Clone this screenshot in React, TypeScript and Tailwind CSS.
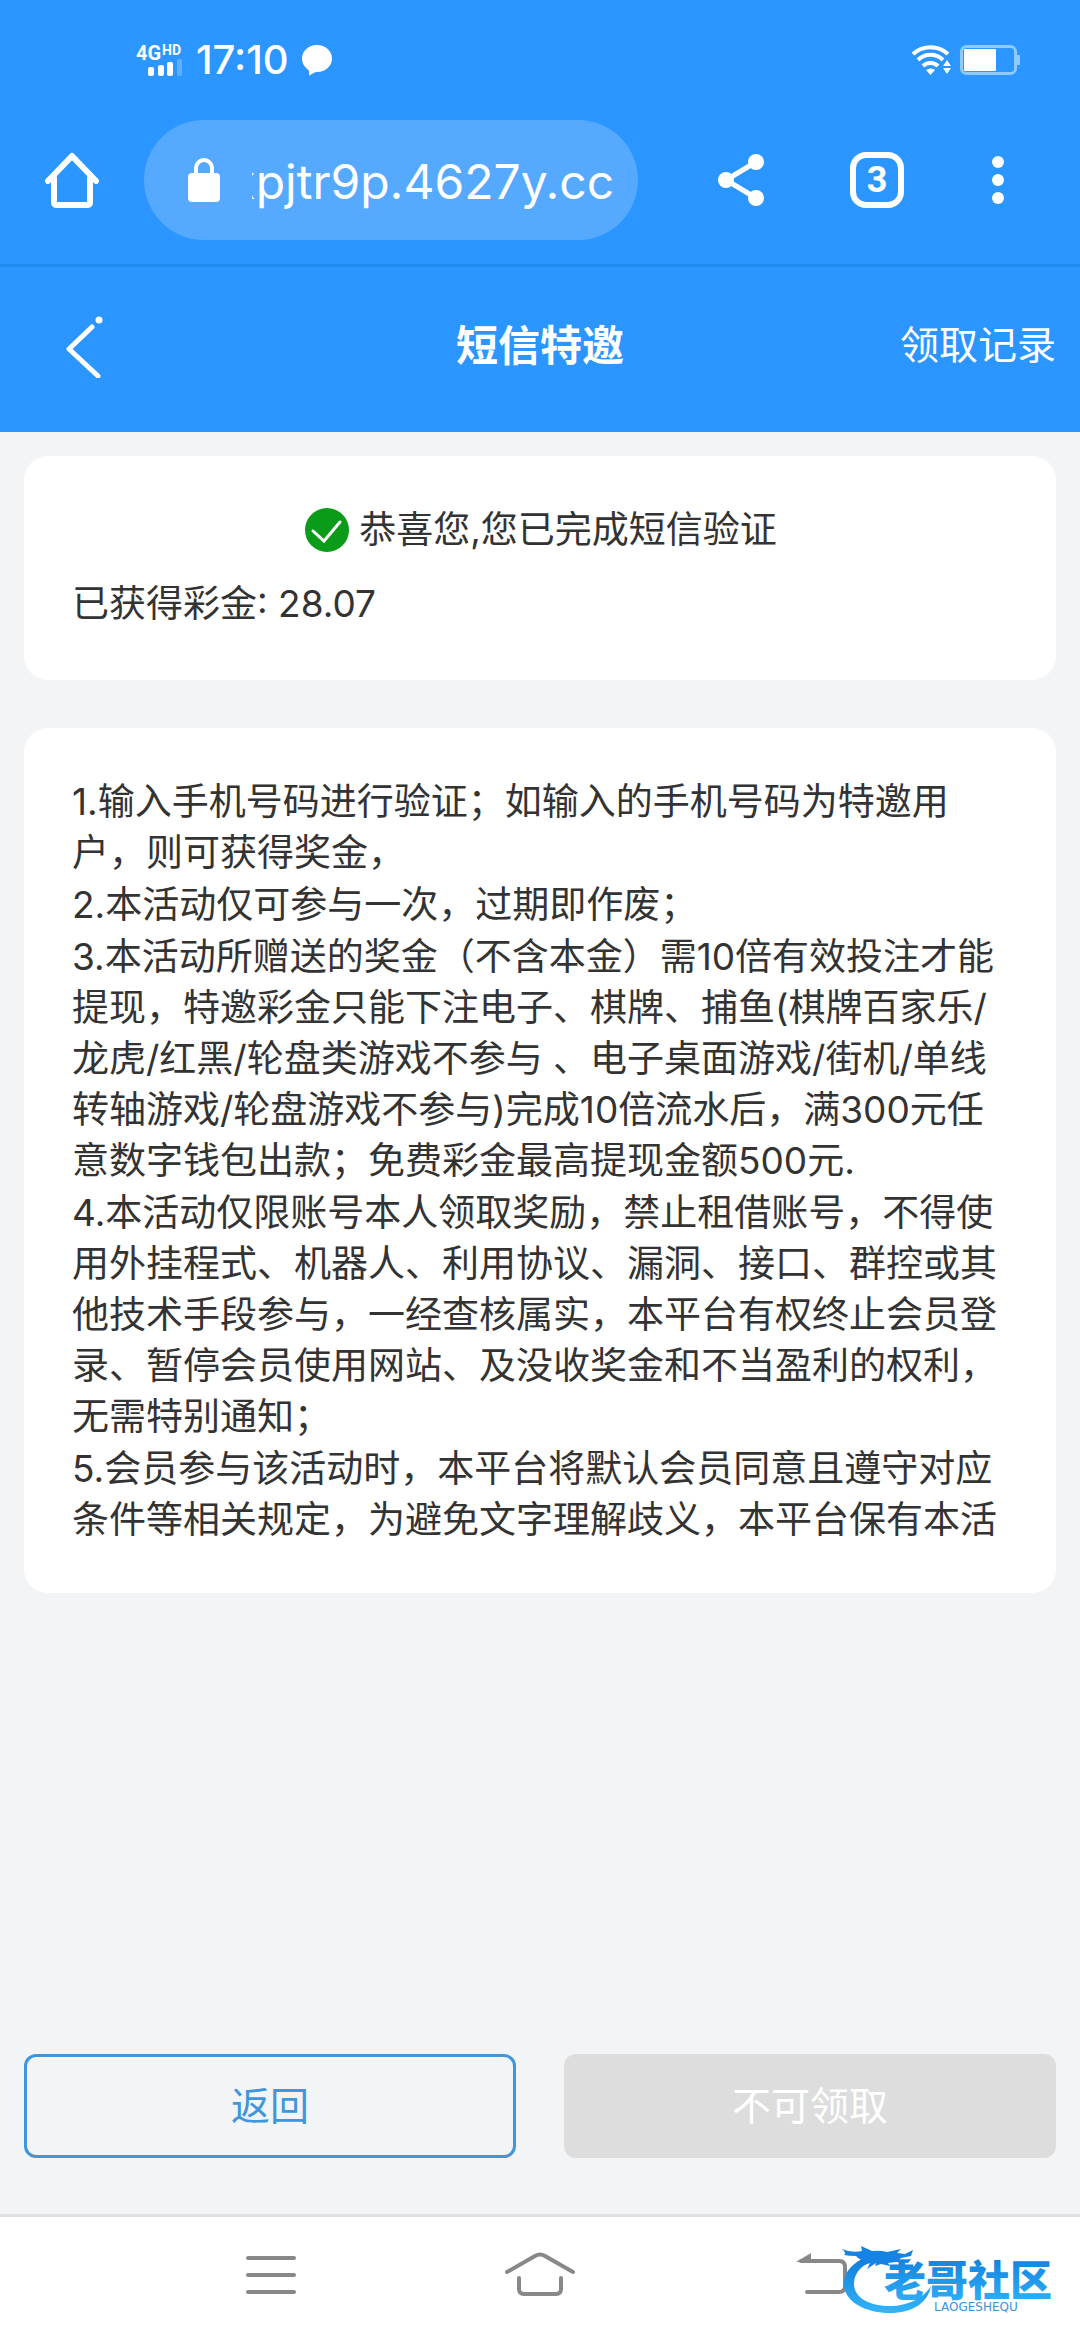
import React from "react";

const rules = [
    "1.输入手机号码进行验证；如输入的手机号码为特邀用户，则可获得奖金，",
    "2.本活动仅可参与一次，过期即作废；",
    "3.本活动所赠送的奖金（不含本金）需10倍有效投注才能提现，特邀彩金只能下注电子、棋牌、捕鱼(棋牌百家乐/龙虎/红黑/轮盘类游戏不参与 、电子桌面游戏/街机/单线转轴游戏/轮盘游戏不参与)完成10倍流水后，满300元任意数字钱包出款；免费彩金最高提现金额500元.",
    "4.本活动仅限账号本人领取奖励，禁止租借账号，不得使用外挂程式、机器人、利用协议、漏洞、接口、群控或其他技术手段参与，一经查核属实，本平台有权终止会员登录、暂停会员使用网站、及没收奖金和不当盈利的权利，无需特别通知；",
    "5.会员参与该活动时，本平台将默认会员同意且遵守对应条件等相关规定，为避免文字理解歧义，本平台保有本活",
];

const StatusBar = () => {
    return (
        <div className="flex h-30 items-center justify-between pl-34 pr-15">
            <div className="flex items-center">
                <svg className="w-12 h-9" viewBox="0 0 48 36" fill="#fff" fontFamily="Roboto, sans-serif" fontWeight="700">
                    <text x="0" y="18" fontSize="20">4G</text>
                    <text x="26" y="13" fontSize="14">HD</text>
                    <rect x="12" y="25" width="6" height="9" rx="2" />
                    <rect x="22" y="23" width="6" height="11" rx="2" />
                    <rect x="31" y="20" width="6" height="14" rx="2" />
                    <rect x="41" y="17" width="5" height="17" rx="2" opacity="0.25" />
                </svg>
                <span className="ml-3 text-[40px] leading-none font-medium">17:10</span>
                <svg className="ml-3 w-8 h-8" viewBox="0 0 32 32" fill="#fff">
                    <path d="M16 1c8.500 0 15 6 15 13.500S24.500 28 16 28c-2 0-3 1-8 3.500 0-2 .5-4-.5-5.500C4 23.500 1 19.500 1 14.500 1 7 7.500 1 16 1z" />
                </svg>
            </div>
            <div className="flex items-center gap-2">
                <svg className="w-10 h-8" viewBox="0 0 40 32" fill="none" stroke="#fff" strokeWidth="4">
                    <path d="M1 10c10-9 25-9 35 0" />
                    <path d="M6 16c7-7 18-7 25 0" />
                    <path d="M11 22c4-4 11-4 15 0" />
                    <path d="M14 26q5-3 9 0l-4.500 5z" fill="#fff" stroke="none" />
                    <path d="M35 16l4 6h-8zM31 24h8l-4 6z" fill="#fff" stroke="none" />
                </svg>
                <svg className="w-15 h-8" viewBox="0 0 60 32" fill="none">
                    <rect x="1.500" y="2.500" width="54" height="27" rx="5" stroke="#8fcaff" strokeWidth="3" />
                    <rect x="4" y="5" width="32" height="22" rx="1" fill="#fff" />
                    <rect x="57" y="11" width="3" height="10" fill="#8fcaff" />
                </svg>
            </div>
        </div>
    );
};

const BrowserBar = () => {
    return (
        <div className="flex h-30 items-center pl-11 pr-19">
            <button aria-label="主页">
                <svg className="w-14 h-14" viewBox="0 0 56 56" fill="none" stroke="#fff" strokeWidth="6" strokeLinecap="round" strokeLinejoin="round">
                    <path d="M4 29L28 4l24 25" />
                    <path d="M10 26v24q0 3 3 3h30q3 0 3-3V26" />
                </svg>
            </button>
            <div className="ml-11 flex h-30 min-w-0 grow items-center rounded-full bg-[#55a9ff] pl-11 pr-6">
                <svg className="w-8 h-11 shrink-0" viewBox="0 0 32 44" fill="none">
                    <path d="M8 18V10a8 8 0 0 1 16 0v8" stroke="#fff" strokeWidth="4" />
                    <rect x="0" y="15" width="32" height="29" rx="4" fill="#fff" />
                </svg>
                <div className="ml-8 flex min-w-0 grow justify-end overflow-hidden pt-1">
                    <span className="text-5xl leading-[64px] whitespace-nowrap">xpjtr9p.4627y.cc</span>
                </div>
            </div>
            <button aria-label="分享" className="ml-20">
                <svg className="w-12 h-13" viewBox="0 0 48 52" fill="#fff">
                    <path d="M38 8L8 26l30 18" fill="none" stroke="#fff" strokeWidth="5" />
                    <circle cx="38" cy="8" r="8" />
                    <circle cx="8" cy="26" r="8" />
                    <circle cx="38" cy="44" r="8" />
                </svg>
            </button>
            <button className="ml-21 flex size-14 items-center justify-center rounded-2xl border-6 border-white font-[Roboto,sans-serif] text-4xl font-bold">
                3
            </button>
            <button aria-label="更多" className="ml-22">
                <svg className="w-3 h-13" viewBox="0 0 12 52" fill="#fff">
                    <circle cx="6" cy="8" r="6" />
                    <circle cx="6" cy="26" r="6" />
                    <circle cx="6" cy="44" r="6" />
                </svg>
            </button>
        </div>
    );
};

const App = () => {
    return (
        <div className="flex min-h-screen flex-col bg-[#f2f4f6] font-['Inter','Noto_Sans_CJK_SC',sans-serif] text-[#333]">
            <header className="bg-[#2b96ff] text-white">
                <StatusBar />
                <BrowserBar />
                <div className="mt-6 h-[3px] bg-[#1f8af0]"></div>
                <nav className="grid h-[165px] grid-cols-3 items-center px-6 pb-2">
                    <button aria-label="返回" className="justify-self-start pl-10">
                        <svg className="w-10 h-16" viewBox="0 0 40 64" fill="none" stroke="#fff" strokeWidth="5" strokeLinecap="round" strokeLinejoin="round">
                            <path d="M28 13L5 35l29 27" />
                            <circle cx="35" cy="6" r="3.500" fill="#fff" stroke="none" />
                        </svg>
                    </button>
                    <h1 className="text-center text-[42px] font-bold">短信特邀</h1>
                    <a href="#records" className="justify-self-end text-[39px]">领取记录</a>
                </nav>
            </header>

            <main className="flex grow flex-col px-6 pt-6">
                <section className="rounded-3xl bg-white px-12 pt-10 pb-10">
                    <div className="flex h-17 items-center justify-center gap-2">
                        <svg className="size-12" viewBox="0 0 48 48" fill="none">
                            <circle cx="24" cy="24" r="22" fill="#0a9b19" />
                            <path d="M10 25l11 10 16-19" stroke="#fff" strokeWidth="3" strokeLinecap="round" />
                        </svg>
                        <p className="text-[37px]">恭喜您,您已完成短信验证</p>
                    </div>
                    <p className="mt-1 text-[37px] leading-[72px]">已获得彩金: 28.07</p>
                </section>

                <section className="mt-12 flex flex-col gap-px rounded-3xl bg-white px-12 py-12 text-[37px] leading-[51px]">
                    {rules.map((rule) => (
                        <p key={rule}>{rule}</p>
                    ))}
                </section>

                <div className="mt-auto grid grid-cols-2 gap-12 pb-14">
                    <button className="h-26 rounded-xl border-3 border-[#4096dc] text-[39px] text-[#4096dc]">返回</button>
                    <button disabled className="h-26 rounded-xl bg-[#ddd] text-[39px] text-white">不可领取</button>
                </div>
            </main>

            {/* 系统导航栏 */}
            <footer className="relative grid h-[126px] grid-cols-3 items-center justify-items-center border-t-3 border-[#dfe2e2] bg-white px-34 pb-2">
                <button aria-label="菜单">
                    <svg className="w-13 h-12" viewBox="0 0 52 48" stroke="#888" strokeWidth="4" strokeLinecap="round">
                        <path d="M3 7h46M3 24h46M3 41h46" />
                    </svg>
                </button>
                <button aria-label="桌面">
                    <svg className="w-18 h-12" viewBox="0 0 72 48" fill="none" stroke="#888" strokeWidth="4" strokeLinecap="round">
                        <path d="M3 21L31 5q5-3 10 0l28 16" />
                        <path d="M15 27v11q0 5 5 5h32q5 0 5-5V27" />
                    </svg>
                </button>
                <button aria-label="后退">
                    <svg className="w-20 h-12" viewBox="0 0 80 48" fill="none" stroke="#888" strokeWidth="4" strokeLinecap="round">
                        <path d="M32 10h38q6 0 6 6v19q0 6-6 6H38" />
                        <path d="M27 11L42 2v9z" fill="#888" stroke="none" />
                    </svg>
                </button>
                <svg className="absolute right-3 bottom-3 w-[228px] h-[84px]" viewBox="0 0 228 84">
                    <defs>
                        <linearGradient id="logo" x1="0" y1="0" x2="0" y2="1">
                            <stop offset="0" stopColor="#0b78d8" />
                            <stop offset="1" stopColor="#32b4fa" />
                        </linearGradient>
                    </defs>
                    <path d="M42 9C20 12 4 24 4 40c0 18 22 29 46 29 22 0 38-10 41-27-7 12-23 20-41 20-20 0-36-8-36-22 0-13 10-21 24-25z" fill="url(#logo)" />
                    <path d="M2 5q9 4 20 2l-1-5 11 5q8-1 15 1l14-3-4 4 8 1 8-4-2 6-10 2-2 2 12-1-3 4-12-1-8 1 2 3-9-2-6 2 1-3-9 6 3-6-8 3 4-5q-7-1-10-5-7 0-12-1Q7 9 2 5z" fill="#1483e4" />
                    <text x="44" y="52" fontSize="42" fontWeight="900" fill="url(#logo)" fontFamily="Noto Sans CJK SC, sans-serif">老哥社区</text>
                    <text x="94" y="67" fontSize="12" fill="#3a92d8" fontFamily="DejaVu Sans, sans-serif">LAOGESHEQU</text>
                </svg>
            </footer>
        </div>
    );
};

export default App;
